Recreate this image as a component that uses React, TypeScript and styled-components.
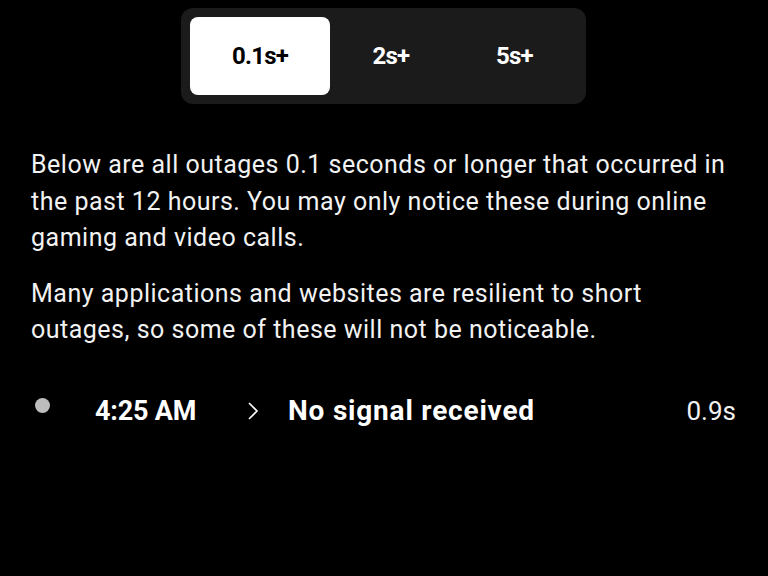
import React, { useState } from 'react';
import styled, { createGlobalStyle } from 'styled-components';

const GlobalStyle = createGlobalStyle`
  html, body {
    margin: 0;
    padding: 0;
    background: #000;
  }
  body {
    font-family: Roboto, "Liberation Sans", sans-serif;
    color: #fff;
  }
`;

const options = ['0.1s+', '2s+', '5s+'];

type Outage = {
  time: string;
  reason: string;
  duration: string;
};

const outages: Outage[] = [{ time: '4:25 AM', reason: 'No signal received', duration: '0.9s' }];

const App = () => {
  const [selected, setSelected] = useState(0);

  return (
    <Page>
      <GlobalStyle />
      <SegmentWrap>
        <Segments>
          {options.map((label, i) => (
            <Segment key={label} $active={i === selected} onClick={() => setSelected(i)}>
              {label}
            </Segment>
          ))}
        </Segments>
      </SegmentWrap>
      <Copy>
        <Paragraph>
          Below are all outages 0.1 seconds or longer that occurred in the past 12 hours. You may only notice these
          during online gaming and video calls.
        </Paragraph>
        <Paragraph>
          Many applications and websites are resilient to short outages, so some of these will not be noticeable.
        </Paragraph>
      </Copy>
      <List>
        {outages.map((o) => (
          <Row key={o.time}>
            <Dot />
            <Time>{o.time}</Time>
            <Chevron viewBox="0 0 12 20" width="12" height="20">
              <path d="M2 2 L10 10 L2 18" fill="none" stroke="#fff" strokeWidth="1.6" />
            </Chevron>
            <Reason>{o.reason}</Reason>
            <Duration>{o.duration}</Duration>
          </Row>
        ))}
      </List>
    </Page>
  );
};

export default App;

const Page = styled.div`
  width: 768px;
  height: 576px;
  background: #000;
  padding: 8px 32px 0 31px;
  box-sizing: border-box;
`;

const SegmentWrap = styled.div`
  display: flex;
  justify-content: center;
`;

const Segments = styled.div`
  display: grid;
  grid-template-columns: 140px 122px 125px;
  width: 405px;
  height: 96px;
  box-sizing: border-box;
  padding: 9px;
  background: #1b1b1b;
  border-radius: 12px;
`;

const Segment = styled.button<{ $active: boolean }>`
  border: none;
  border-radius: 8px;
  background: ${(p) => (p.$active ? '#fff' : 'transparent')};
  color: ${(p) => (p.$active ? '#000' : '#fff')};
  font-family: Roboto, "Liberation Sans", sans-serif;
  font-weight: 700;
  font-size: 24px;
  letter-spacing: -0.8px;
  cursor: pointer;
  padding: 0;
`;

const Copy = styled.div`
  margin-top: 43px;
`;

const Paragraph = styled.p`
  margin: 0 0 19px;
  font-size: 25px;
  line-height: 36.5px;
  letter-spacing: 0.5px;
  color: #f2f2f2;
`;

const List = styled.div`
  margin-top: 42px;
`;

const Row = styled.div`
  display: flex;
  align-items: center;
  height: 40px;
`;

const Dot = styled.span`
  width: 15px;
  height: 15px;
  border-radius: 50%;
  background: #bdbdbd;
  margin: -10px 0 0 4px;
`;

const Time = styled.span`
  font-weight: 700;
  font-size: 27px;
  margin-left: 45px;
  width: 150px;
  letter-spacing: -0.2px;
`;

const Chevron = styled.svg`
  margin-left: 2px;
`;

const Reason = styled.span`
  font-weight: 700;
  font-size: 28px;
  margin-left: 29px;
  letter-spacing: 0.8px;
  flex: 1;
`;

const Duration = styled.span`
  font-size: 26px;
  color: #f2f2f2;
`;
